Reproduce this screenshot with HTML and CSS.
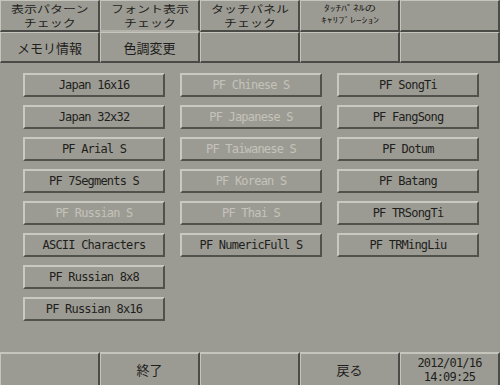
FILE: index.html
```html
<!DOCTYPE html>
<html lang="ja">
<head>
  <meta charset="UTF-8">
  <title>フォント表示チェック</title>
  <link rel="stylesheet" href="styles.css">
</head>
<body>
  <div class="screen">
    <div class="tabs">
      <div class="tab"><span class="two">表示パターン<br>チェック</span></div>
      <div class="tab active"><span class="two">フォント表示<br>チェック</span></div>
      <div class="tab"><span class="two">タッチパネル<br>チェック</span></div>
      <div class="tab"><span class="tiny">ﾀｯﾁﾊﾟﾈﾙの<br>ｷｬﾘﾌﾞﾚｰｼｮﾝ</span></div>
      <div class="tab"></div>
      <div class="tab">メモリ情報</div>
      <div class="tab">色調変更</div>
      <div class="tab"></div>
      <div class="tab"></div>
      <div class="tab"></div>
    </div>

    <div class="content">
      <div class="col">
        <button class="btn">Japan 16x16</button>
        <button class="btn">Japan 32x32</button>
        <button class="btn">PF Arial S</button>
        <button class="btn">PF 7Segments S</button>
        <button class="btn off">PF Russian S</button>
        <button class="btn">ASCII Characters</button>
        <button class="btn">PF Russian 8x8</button>
        <button class="btn">PF Russian 8x16</button>
      </div>
      <div class="col">
        <button class="btn off">PF Chinese S</button>
        <button class="btn off">PF Japanese S</button>
        <button class="btn off">PF Taiwanese S</button>
        <button class="btn off">PF Korean S</button>
        <button class="btn off">PF Thai S</button>
        <button class="btn">PF NumericFull S</button>
      </div>
      <div class="col">
        <button class="btn">PF SongTi</button>
        <button class="btn">PF FangSong</button>
        <button class="btn">PF Dotum</button>
        <button class="btn">PF Batang</button>
        <button class="btn">PF TRSongTi</button>
        <button class="btn">PF TRMingLiu</button>
      </div>
    </div>

    <div class="footer">
      <div class="cell"></div>
      <div class="cell">終了</div>
      <div class="cell"></div>
      <div class="cell">戻る</div>
      <div class="cell clock">2012/01/16<br>14:09:25</div>
    </div>
  </div>
</body>
</html>
```

FILE: styles.css
```css
body {
  margin: 0;
  padding: 0;
  background: #9c9b93;
}

.screen {
  width: 500px;
  height: 385px;
  display: flex;
  flex-direction: column;
  background: #9c9b93;
  font-family: "Noto Sans CJK JP", sans-serif;
  color: #1e1e1c;
  overflow: hidden;
}

.tabs {
  display: grid;
  grid-template-columns: repeat(5, 100px);
  grid-template-rows: 32px 31px;
}

.tab {
  box-sizing: border-box;
  border-top: 1px solid #c6c5bd;
  border-left: 1px solid #c6c5bd;
  border-right: 2px solid #4a4a46;
  border-bottom: 2px solid #4a4a46;
  display: flex;
  align-items: center;
  justify-content: center;
  text-align: center;
  font-size: 13px;
}

.tab.active {
  border-bottom-color: #b4b3ab;
}

/* two-line captions: small font stretched sideways, like the panel's bitmap font */
.two {
  display: inline-block;
  font-size: 10px;
  line-height: 14.5px;
  transform: scaleX(1.3);
  margin-top: 1px;
}

.tiny {
  display: inline-block;
  font-size: 8px;
  line-height: 12px;
  transform: scaleX(1.45);
  margin-bottom: 3px;
}

.content {
  flex: 1;
  display: flex;
  gap: 15px;
  padding: 10px 0 0 23px;
}

.col {
  display: flex;
  flex-direction: column;
  gap: 8px;
  width: 142px;
}

.btn {
  box-sizing: border-box;
  width: 142px;
  height: 24px;
  margin: 0;
  padding: 0;
  background: #9c9b93;
  border-top: 2px solid #cac9c1;
  border-left: 2px solid #cac9c1;
  border-right: 2px solid #52524d;
  border-bottom: 2px solid #52524d;
  font-family: "DejaVu Sans Mono", monospace;
  font-size: 12px;
  letter-spacing: -0.8px;
  color: #1e1e1c;
}

.btn.off {
  color: #c4c3bb;
}

.footer {
  display: grid;
  grid-template-columns: repeat(5, 100px);
  height: 33px;
}

.cell {
  box-sizing: border-box;
  border-top: 2px solid #c6c5bd;
  border-left: 1px solid #c6c5bd;
  border-right: 2px solid #4a4a46;
  display: flex;
  align-items: center;
  justify-content: center;
  font-size: 13px;
}

.cell.clock {
  font-family: "DejaVu Sans Mono", monospace;
  font-size: 12px;
  letter-spacing: -0.8px;
  line-height: 14px;
  text-align: center;
}
```
